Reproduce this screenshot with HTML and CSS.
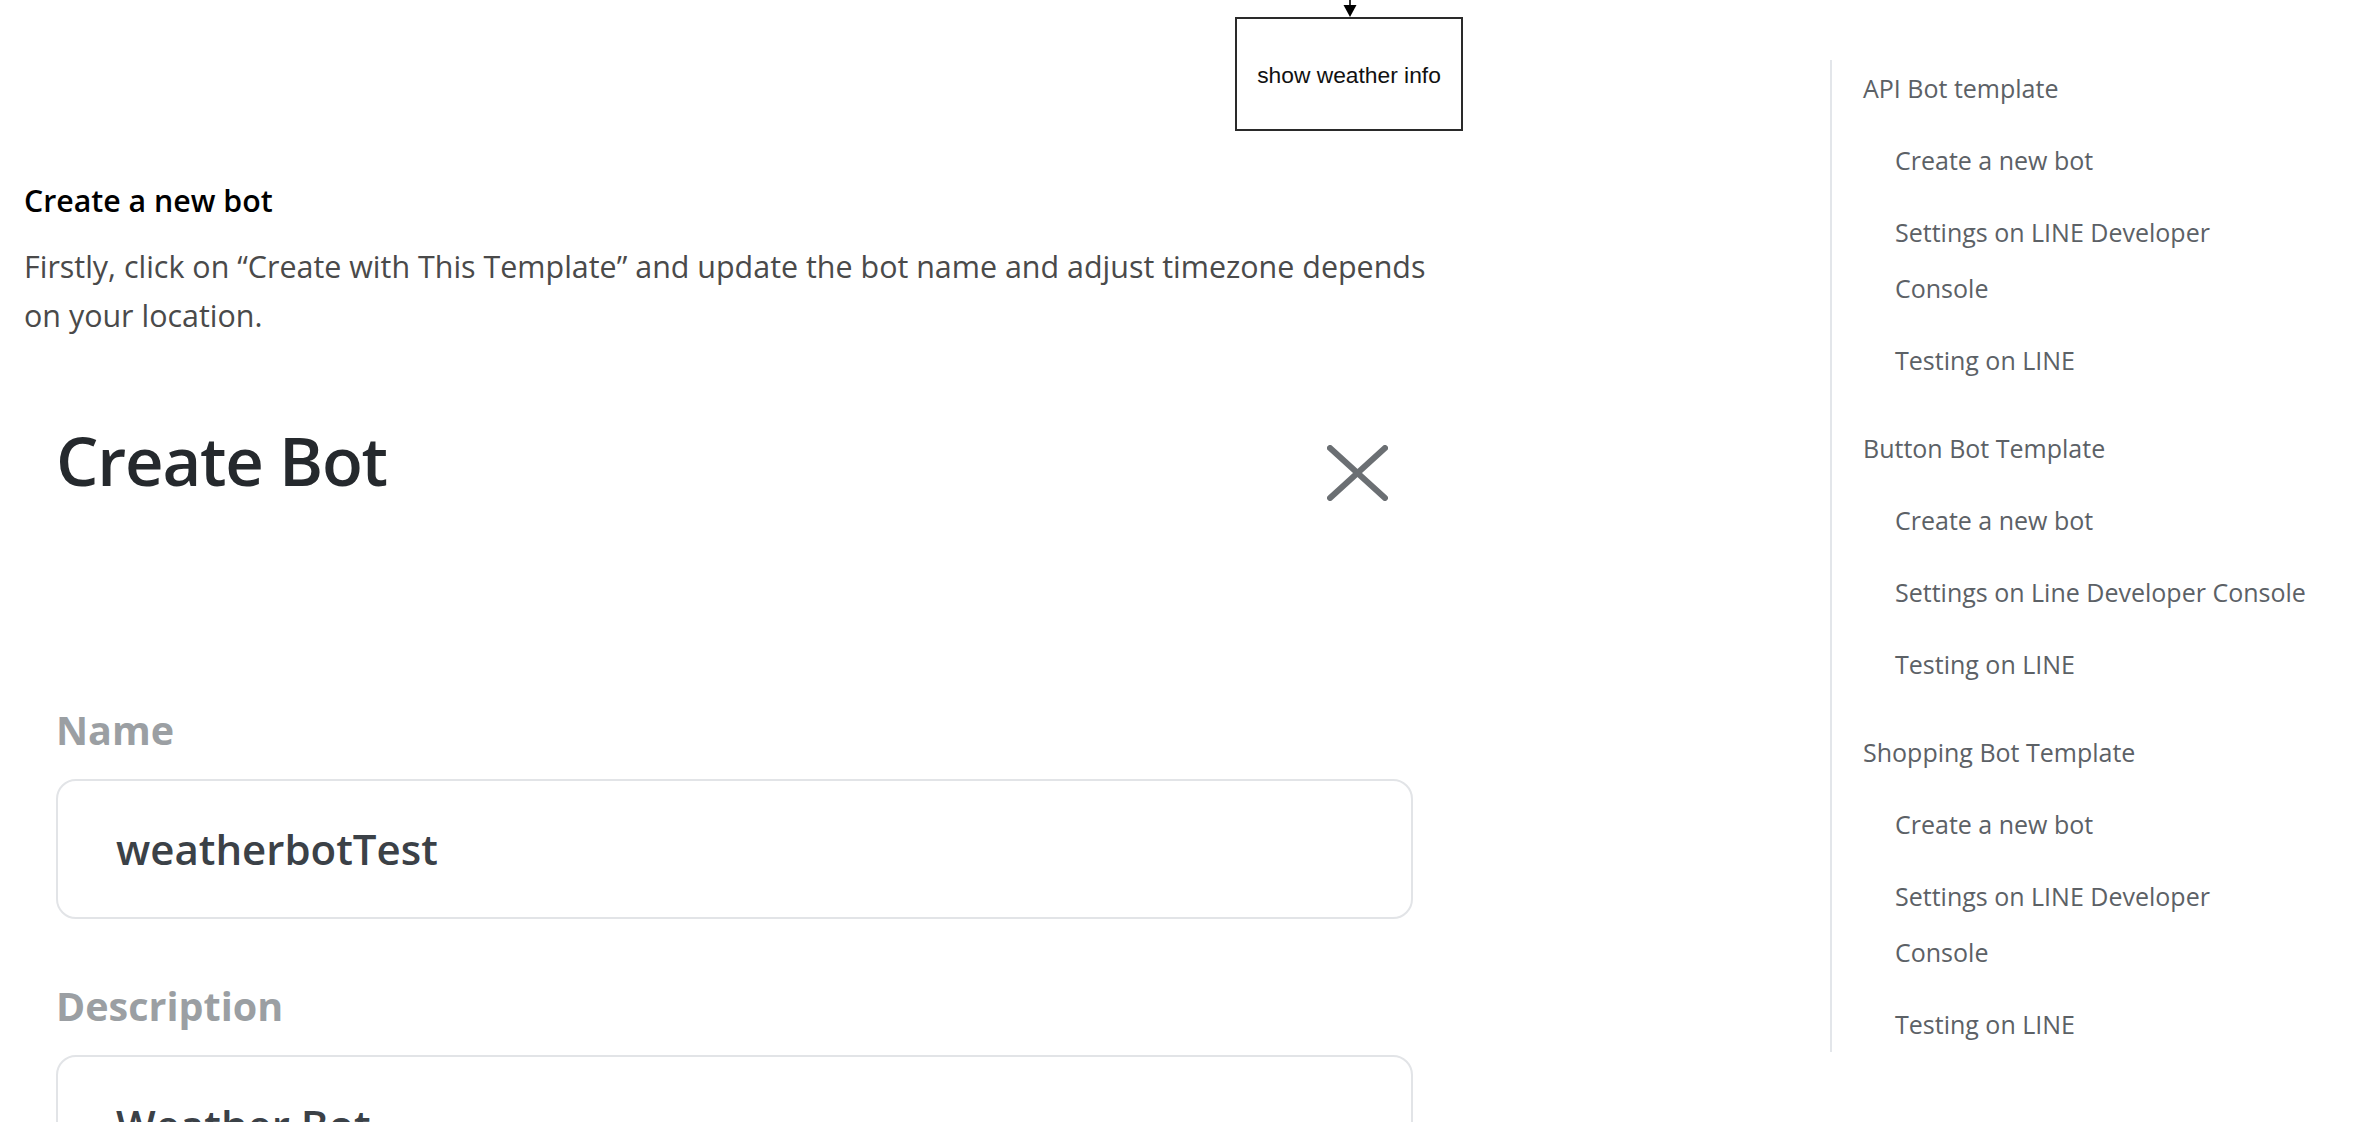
FILE: index.html
```html
<!DOCTYPE html>
<html lang="en">
<head>
<meta charset="utf-8">
<title>API Bot template</title>
<link rel="stylesheet" href="styles.css">
</head>
<body>
<div class="page">
  <main class="content">
    <div class="diagram">
      <svg class="diagram-arrow" width="16" height="17" viewBox="0 0 16 17">
        <line x1="8" y1="0" x2="8" y2="7" stroke="#000" stroke-width="1.6"/>
        <polygon points="1.5,5 14.5,5 8,17" fill="#000"/>
      </svg>
      <div class="diagram-node">show weather info</div>
    </div>

    <h3 class="section-title">Create a new bot</h3>
    <p class="section-text">Firstly, click on “Create with This Template” and update the bot name and adjust timezone depends on your location.</p>

    <div class="shot">
      <div class="modal-head">
        <h2 class="modal-title">Create Bot</h2>
        <svg class="modal-close" width="61" height="56" viewBox="0 0 61 56">
          <line x1="3" y1="3" x2="58" y2="53"/>
          <line x1="58" y1="3" x2="3" y2="53"/>
        </svg>
      </div>
      <div class="field">
        <div class="field-label">Name</div>
        <div class="field-input">weatherbotTest</div>
      </div>
      <div class="field">
        <div class="field-label">Description</div>
        <div class="field-input">Weather Bot</div>
      </div>
    </div>
  </main>

  <aside class="toc">
    <ul class="toc-list">
      <li class="toc-group"><a href="#">API Bot template</a>
        <ul class="toc-sub">
          <li><a href="#">Create a new bot</a></li>
          <li><a href="#">Settings on LINE Developer Console</a></li>
          <li><a href="#">Testing on LINE</a></li>
        </ul>
      </li>
      <li class="toc-group"><a href="#">Button Bot Template</a>
        <ul class="toc-sub">
          <li><a href="#">Create a new bot</a></li>
          <li class="toc-nowrap"><a href="#">Settings on Line Developer Console</a></li>
          <li><a href="#">Testing on LINE</a></li>
        </ul>
      </li>
      <li class="toc-group"><a href="#">Shopping Bot Template</a>
        <ul class="toc-sub">
          <li><a href="#">Create a new bot</a></li>
          <li><a href="#">Settings on LINE Developer Console</a></li>
          <li><a href="#">Testing on LINE</a></li>
        </ul>
      </li>
    </ul>
  </aside>
</div>
</body>
</html>
```

FILE: styles.css
```css
html, body {
  margin: 0;
  padding: 0;
  background: #ffffff;
}

body {
  font-family: "Open Sans", "Noto Sans", sans-serif;
  color: #4a4a4a;
}

.page {
  display: flex;
  align-items: flex-start;
}

/* ---------- main column ---------- */
.content {
  flex: none;
  width: 1416px;
  margin-left: 24px;
}

.diagram {
  display: flex;
  flex-direction: column;
  align-items: flex-start;
}

.diagram-arrow {
  display: block;
  margin-left: 1318px;
}

.diagram-node {
  box-sizing: border-box;
  width: 228px;
  height: 114px;
  margin-left: 1211px;
  padding-top: 3px;
  border: 2px solid #2a2a2a;
  display: flex;
  align-items: center;
  justify-content: center;
  font-family: "Liberation Sans", Arial, sans-serif;
  font-size: 22.8px;
  color: #111111;
}

.section-title {
  margin: 49px 0 0;
  font-size: 30.3px;
  line-height: 42.7px;
  font-weight: 600;
  color: #000000;
}

.section-text {
  margin: 19px 0 0;
  font-size: 30.45px;
  line-height: 49px;
  color: #4a4a4a;
}

/* ---------- embedded screenshot of the modal ---------- */
.shot {
  margin-top: 30px;
  padding: 49px 27px 0 32px;
}

.modal-head {
  display: flex;
  justify-content: space-between;
  align-items: flex-start;
  margin-bottom: 205px;
}

.modal-title {
  margin: 0;
  font-size: 67px;
  line-height: 82.8px;
  font-weight: 600;
  letter-spacing: -1.2px;
  color: #25292d;
}

.modal-close {
  display: block;
  margin: 26px 25px 0 0;
  stroke: #6b6f73;
  stroke-width: 6;
  stroke-linecap: round;
}

.field {
  margin-bottom: 64px;
}

.field-label {
  font-size: 39.5px;
  line-height: 47px;
  font-weight: 700;
  color: #9b9fa3;
  margin-bottom: 25px;
}

.field-input {
  box-sizing: border-box;
  height: 140px;
  border: 2px solid #e2e4e7;
  border-radius: 20px;
  display: flex;
  align-items: center;
  padding-left: 58px;
  font-size: 42px;
  font-weight: 600;
  color: #3b4147;
}

/* ---------- table of contents ---------- */
.toc {
  flex: none;
  width: 466px;
  margin: 60px 0 0 390px;
  border-left: 2px solid #e3e6ea;
}

.toc-list {
  list-style: none;
  margin: 0;
  padding: 0 0 0 31px;
  font-size: 25px;
  line-height: 56px;
  color: #5c6166;
}

.toc-list a {
  color: inherit;
  text-decoration: none;
}

.toc-group + .toc-group {
  margin-top: 32px;
}

.toc-sub {
  list-style: none;
  margin: 0;
  padding-left: 32px;
}

.toc-sub li {
  margin-top: 16px;
}

.toc-nowrap {
  white-space: nowrap;
}
```
